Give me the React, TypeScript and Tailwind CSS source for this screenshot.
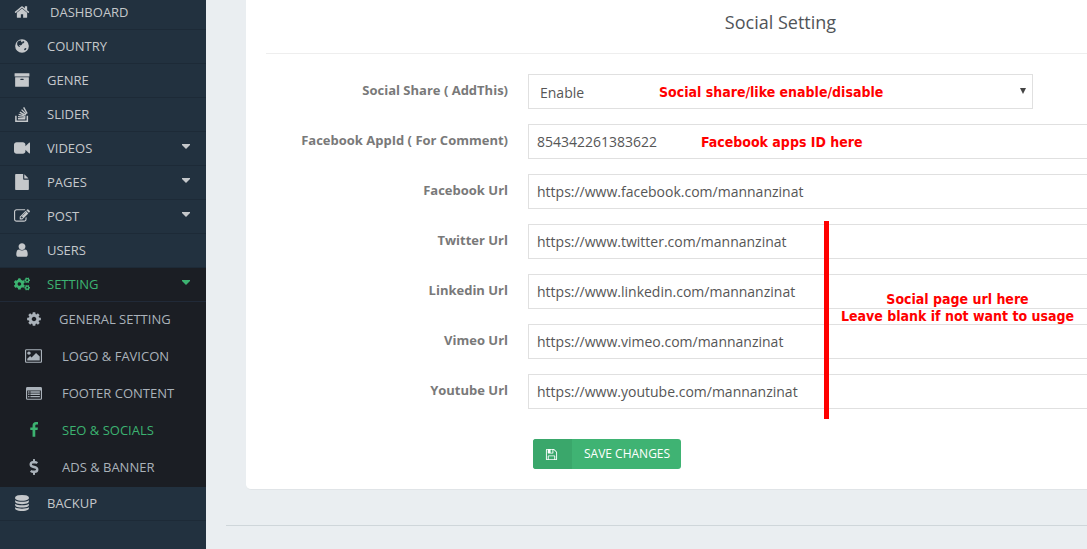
import type { ReactNode } from "react";
import { FaCogs, FaDollarSign } from "react-icons/fa";

function Glyph({ d, box = "0 0 1792 1792", className = "size-[14px]" }: { d: string; box?: string; className?: string }) {
  return (
    <svg viewBox={box} className={className} fill="currentColor" fillRule="evenodd" aria-hidden="true">
      <path d={d} />
    </svg>
  );
}

const HOME = "M1472 992v480q0 26-19 45t-45 19h-384v-384h-256v384h-384q-26 0-45-19t-19-45v-480q0-1 .5-3t.5-3l575-474 575 474q1 2 1 6zm223-69l-62 74q-8 9-21 11h-3q-13 0-21-7l-692-577-692 577q-12 8-24 7-13-2-21-11l-62-74q-8-10-7-23.5t11-21.5l719-599q32-26 76-26t76 26l244 204v-195q0-14 9-23t23-9h192q14 0 23 9t9 23v408l219 182q10 8 11 21.5t-7 23.5z";
const GLOBE = "M896 128a768 768 0 1 0 0 1536a768 768 0 1 0 0-1536zM520 330l170-50 130 40 -30 110 120 70 60-130 130 -20 70 110 -110 120 -120 40 -70 140 -110 90 -130-60 -60 60 110 110 -60 60 -150-100 -100-150 -20-200 60-160zM1180 1180l150-60 60 60 -90 150 -120 50 -50-80z";
const ARCHIVE = "M1088 832q0-26-19-45t-45-19h-256q-26 0-45 19t-19 45 19 45 45 19h256q26 0 45-19t19-45zm576-192v960q0 26-19 45t-45 19h-1408q-26 0-45-19t-19-45v-960q0-26 19-45t45-19h1408q26 0 45 19t19 45zm64-448v256q0 26-19 45t-45 19h-1536q-26 0-45-19t-19-45v-256q0-26 19-45t45-19h1536q26 0 45 19t19 45z";
const STACK = "M128 1088h170v534h1110v-534h170v704h-1450zM440 1350h830v160h-830zM455 1120l835 80-15 150-835-80zM545 860l760 200-40 150-760-200zM690 610l650 380-80 135-650-380zM900 350l530 530-110 110-530-530zM1150 110l390 690-140 75-390-690z";
const VIDEO = "M1792 352v1088q0 42-39 59-13 5-25 5-27 0-45-19l-403-403v166q0 119-84.5 203.5t-203.5 84.5h-704q-119 0-203.5-84.5t-84.5-203.5v-704q0-119 84.5-203.5t203.5-84.5h704q119 0 203.5 84.5t84.5 203.5v165l403-402q18-19 45-19 12 0 25 5 39 17 39 59z";
const FILE = "M1152 512v-472q22 14 36 28l408 408q14 14 28 36h-472zm-128 32q0 40 28 68t68 28h544v1056q0 40-28 68t-68 28h-1344q-40 0-68-28t-28-68v-1600q0-40 28-68t68-28h800v544z";
const EDIT = "M888 1184l116-116-152-152-116 116v56h96v96h56zm440-720q-16-16-33 1l-350 350q-17 17-1 33t33-1l350-350q17-17 1-33zm80 594v190q0 119-84.5 203.5t-203.5 84.5h-832q-119 0-203.5-84.5t-84.5-203.5v-832q0-119 84.5-203.5t203.5-84.5h832q63 0 117 25 15 7 18 23 3 17-9 29l-49 49q-14 14-32 8-23-6-45-6h-832q-66 0-113 47t-47 113v832q0 66 47 113t113 47h832q66 0 113-47t47-113v-126q0-13 9-22l64-64q15-15 35-7t20 29zm-96-738l288 288-672 672h-288v-288zm444 132l-92 92-288-288 92-92q28-28 68-28t68 28l152 152q28 28 28 68t-28 68z";
const USER = "M1536 1399q0 109-62.5 187t-150.5 78h-854q-88 0-150.5-78t-62.5-187q0-85 8.5-160.5t31.5-152 58.5-131 94-89 134.5-34.5q131 128 313 128t313-128q76 0 134.5 34.5t94 89 58.5 131 31.5 152 8.5 160.5zm-256-887q0 159-112.5 271.5t-271.5 112.5-271.5-112.5-112.5-271.5 112.5-271.5 271.5-112.5 271.5 112.5 112.5 271.5z";
const COG = "M1152 896q0-106-75-181t-181-75-181 75-75 181 75 181 181 75 181-75 75-181zm512-109v222q0 12-8 23t-20 13l-185 28q-19 54-39 91 35 50 107 138 10 12 10 25t-9 23q-27 37-99 108t-94 71q-12 0-26-9l-138-108q-44 23-91 38-16 136-29 186-7 28-36 28h-222q-14 0-24.5-8.5t-11.5-21.5l-28-184q-49-16-90-37l-141 107q-10 9-25 9-14 0-25-11-126-114-165-168-7-10-7-23 0-12 8-23 15-21 51-66.5t54-70.5q-27-50-41-99l-183-27q-13-2-21-12.5t-8-23.5v-222q0-12 8-23t19-13l186-28q14-46 39-92-40-57-107-138-10-12-10-24 0-10 9-23 26-36 98.5-107.5t94.5-71.5q13 0 26 10l138 107q44-23 91-38 16-136 29-186 7-28 36-28h222q14 0 24.5 8.5t11.5 21.5l28 184q49 16 90 37l142-107q9-9 24-9 13 0 25 10 129 119 165 170 7 8 7 22 0 12-8 23-15 21-51 66.5t-54 70.5q26 50 41 98l183 28q13 2 21 12.5t8 23.5z";
const PICTURE = "M576 576q0 80-56 136t-136 56-136-56-56-136 56-136 136-56 136 56 56 136zm1024 384v448h-1408v-192l320-320 160 160 512-512zm96-704h-1600q-13 0-22.5 9.5t-9.5 22.5v1216q0 13 9.5 22.5t22.5 9.5h1600q13 0 22.5-9.5t9.5-22.5v-1216q0-13-9.5-22.5t-22.5-9.5zm160 32v1216q0 66-47 113t-113 47h-1600q-66 0-113-47t-47-113v-1216q0-66 47-113t113-47h1600q66 0 113 47t47 113z";
const LIST = "M160 224h1472q160 0 160 160v1120q0 160-160 160h-1472q-160 0-160-160v-1120q0-160 160-160zM128 624v880q0 32 32 32h1472q32 0 32-32v-880zM240 710h150v150h-150zM490 710h1062v150h-1062zM240 965h150v150h-150zM490 965h1062v150h-1062zM240 1220h150v150h-150zM490 1220h1062v150h-1062z";
const FACEBOOK = "M1343 12v264h-157q-86 0-116 36t-30 108v189h293l-39 296h-254v759h-306v-759h-255v-296h255v-218q0-186 104-288.5t277-102.5q147 0 228 12z";
const DATABASE = "M896 768q237 0 443-43t325-127v170q0 69-103 128t-280 93.5-385 34.5-385-34.5-280-93.5-103-128v-170q119 84 325 127t443 43zm0 768q237 0 443-43t325-127v170q0 69-103 128t-280 93.5-385 34.5-385-34.5-280-93.5-103-128v-170q119 84 325 127t443 43zm0-384q237 0 443-43t325-127v170q0 69-103 128t-280 93.5-385 34.5-385-34.5-280-93.5-103-128v-170q119 84 325 127t443 43zm0-1152q208 0 385 34.5t280 93.5 103 128v128q0 69-103 128t-280 93.5-385 34.5-385-34.5-280-93.5-103-128v-128q0-69 103-128t280-93.5 385-34.5z";
const FLOPPY = "M512 1536h768v-384h-768v384zm896 0h128v-896q0-14-10-38.5t-20-34.5l-281-281q-10-10-34-20t-39-10v416q0 40-28 68t-68 28h-576q-40 0-68-28t-28-68v-416h-128v1280h128v-416q0-40 28-68t68-28h832q40 0 68 28t28 68v416zm-384-928v-320q0-13-9.5-22.5t-22.5-9.5h-192q-13 0-22.5 9.5t-9.5 22.5v320q0 13 9.5 22.5t22.5 9.5h192q13 0 22.5-9.5t9.5-22.5zm640 32v928q0 40-28 68t-68 28h-1344q-40 0-68-28t-28-68v-1344q0-40 28-68t68-28h928q40 0 88 20t76 48l280 280q28 28 48 76t20 88z";

const BIG = "size-4";

function Caret() {
  return (
    <svg viewBox="0 0 8 5" className="mb-[2px] ml-auto h-[5px] w-2" fill="currentColor" aria-hidden="true">
      <path d="M0 0h8v1L4 5 0 1z" />
    </svg>
  );
}

type Item = { label: string; icon: ReactNode; caret?: boolean; active?: boolean };

const mainItems: Item[] = [
  { label: "COUNTRY", icon: <Glyph d={GLOBE} className={BIG} /> },
  { label: "GENRE", icon: <Glyph d={ARCHIVE} className={BIG} /> },
  { label: "SLIDER", icon: <Glyph d={STACK} className={BIG} /> },
  { label: "VIDEOS", icon: <Glyph d={VIDEO} className={BIG} />, caret: true },
  { label: "PAGES", icon: <Glyph d={FILE} className={BIG} />, caret: true },
  { label: "POST", icon: <Glyph d={EDIT} className={BIG} />, caret: true },
  { label: "USERS", icon: <Glyph d={USER} className={BIG} /> },
];

const subItems: Item[] = [
  { label: "GENERAL SETTING", icon: <Glyph d={COG} className={BIG} /> },
  { label: "LOGO & FAVICON", icon: <Glyph d={PICTURE} box="-64 0 1920 1792" className="h-4 w-[17px]" /> },
  { label: "FOOTER CONTENT", icon: <Glyph d={LIST} className={BIG} /> },
  { label: "SEO & SOCIALS", icon: <Glyph d={FACEBOOK} className={BIG} />, active: true },
  { label: "ADS & BANNER", icon: <FaDollarSign className="size-4" /> },
];

function MenuLink({ item }: { item: Item }) {
  return (
    <a href="#" className="flex h-[34px] items-center border-b border-[#1d2a37] pr-4 pb-[2px] pl-[14px]">
      <span className="flex w-4 justify-center">{item.icon}</span>
      <span className="ml-[17px]">{item.label}</span>
      {item.caret && <Caret />}
    </a>
  );
}

function Sidebar() {
  return (
    <nav className="w-[206px] shrink-0 bg-[#22313f] text-[13px] leading-5 text-[#c5c8cb]">
      <a href="#" className="flex h-[30px] items-center border-b border-[#1d2a37] pb-[6px] pl-[14px]">
        <Glyph d={HOME} className={BIG} />
        <span className="ml-5">DASHBOARD</span>
      </a>
      {mainItems.map((item) => (
        <MenuLink key={item.label} item={item} />
      ))}
      <div className="bg-[#1b1e24]">
        <a href="#" className="flex h-[34px] items-center border-b border-[#212a38] pr-4 pb-[2px] pl-[14px] text-[#3cb371]">
          <FaCogs className="size-4" />
          <span className="ml-[17px]">SETTING</span>
          <Caret />
        </a>
        {subItems.map((item, i) => (
          <a
            key={item.label}
            href="#"
            className={`flex h-[37px] items-center pb-1 pl-[25px] ${item.active ? "text-[#3cb371]" : "text-[#aab2ba]"}`}
          >
            <span className="flex w-[17px] justify-center">{item.icon}</span>
            <span className={i === 0 ? "ml-[17px]" : "ml-5"}>{item.label}</span>
          </a>
        ))}
      </div>
      <MenuLink item={{ label: "BACKUP", icon: <Glyph d={DATABASE} className={BIG} /> }} />
    </nav>
  );
}

const fields = [
  { id: "appid", label: "Facebook AppId ( For Comment)", value: "854342261383622" },
  { id: "facebook", label: "Facebook Url", value: "https://www.facebook.com/mannanzinat" },
  { id: "twitter", label: "Twitter Url", value: "https://www.twitter.com/mannanzinat" },
  { id: "linkedin", label: "Linkedin Url", value: "https://www.linkedin.com/mannanzinat" },
  { id: "vimeo", label: "Vimeo Url", value: "https://www.vimeo.com/mannanzinat" },
  { id: "youtube", label: "Youtube Url", value: "https://www.youtube.com/mannanzinat" },
];

function Row({ id, label, children }: { id: string; label: string; children: ReactNode }) {
  return (
    <div className="mb-[15px] flex items-start gap-5">
      <label htmlFor={id} className="w-[242px] shrink-0 pt-[6px] text-right text-[13px] leading-5 font-bold text-[#797979]">
        {label}
      </label>
      {children}
    </div>
  );
}

function Note({ className, children }: { className: string; children: ReactNode }) {
  return (
    <p className={`pointer-events-none absolute text-center font-['DejaVu_Sans_Condensed','DejaVu_Sans',sans-serif] text-[14px] leading-[17px] font-bold whitespace-nowrap text-[#ff0000] ${className}`}>
      {children}
    </p>
  );
}

export default function App() {
  return (
    <div className="flex min-h-screen overflow-hidden bg-[#eaeef1] font-['Open_Sans','Noto_Sans',sans-serif]">
      <Sidebar />
      <main className="min-w-0 flex-1 pl-5">
        <section className="relative ml-5 min-w-[1069px] rounded-b-[5px] border-b border-[#e0e4e7] bg-white px-5 pb-5">
          <h1 className="border-b border-[#eeeeee] pt-[10px] pb-[19px] text-center text-[18px] leading-6 text-[#505458]">
            Social Setting
          </h1>
          <form className="pt-5" onSubmit={(e) => e.preventDefault()}>
            <Row id="share" label="Social Share ( AddThis)">
              <div className="relative w-[505px]">
                <select
                  id="share"
                  defaultValue="Enable"
                  className="h-[35px] w-full appearance-none border border-[#e0e0e0] bg-white pt-[2px] pl-[11px] text-[14px] text-[#565656]"
                >
                  <option>Enable</option>
                  <option>Disable</option>
                </select>
                <svg viewBox="0 0 6 6" className="pointer-events-none absolute top-[14px] right-[7px] size-[6px]" fill="#444444" aria-hidden="true">
                  <path d="M0 0h6L3 6z" />
                </svg>
              </div>
            </Row>
            {fields.map((f) => (
              <Row key={f.id} id={f.id} label={f.label}>
                <input
                  id={f.id}
                  type="text"
                  defaultValue={f.value}
                  className="h-[35px] min-w-0 flex-1 border border-[#e0e0e0] bg-white px-2 text-[14px] text-[#565656]"
                />
              </Row>
            ))}
            <button
              type="submit"
              className="mt-[30px] ml-[267px] flex h-[30px] items-center overflow-hidden rounded-[3px] bg-[#3fb373] pr-[11px] text-[12px] text-white"
            >
              <span className="mr-3 flex h-full w-[39px] items-center justify-center bg-[#3aa76b] pr-[2px]">
                <Glyph d={FLOPPY} className="size-[13px]" />
              </span>
              SAVE CHANGES
            </button>
          </form>
          <Note className="top-[84px] left-[413px]">Social share/like enable/disable</Note>
          <Note className="top-[134px] left-[455px]">Facebook apps ID here</Note>
          <div className="absolute top-[221px] left-[578px] h-[198px] w-[5px] bg-[#ff0000]" />
          <Note className="top-[291px] left-[595px]">
            Social page url here
            <br />
            Leave blank if not want to usage
          </Note>
        </section>
        <hr className="mt-[35px] border-[#cfd6da]" />
      </main>
    </div>
  );
}
